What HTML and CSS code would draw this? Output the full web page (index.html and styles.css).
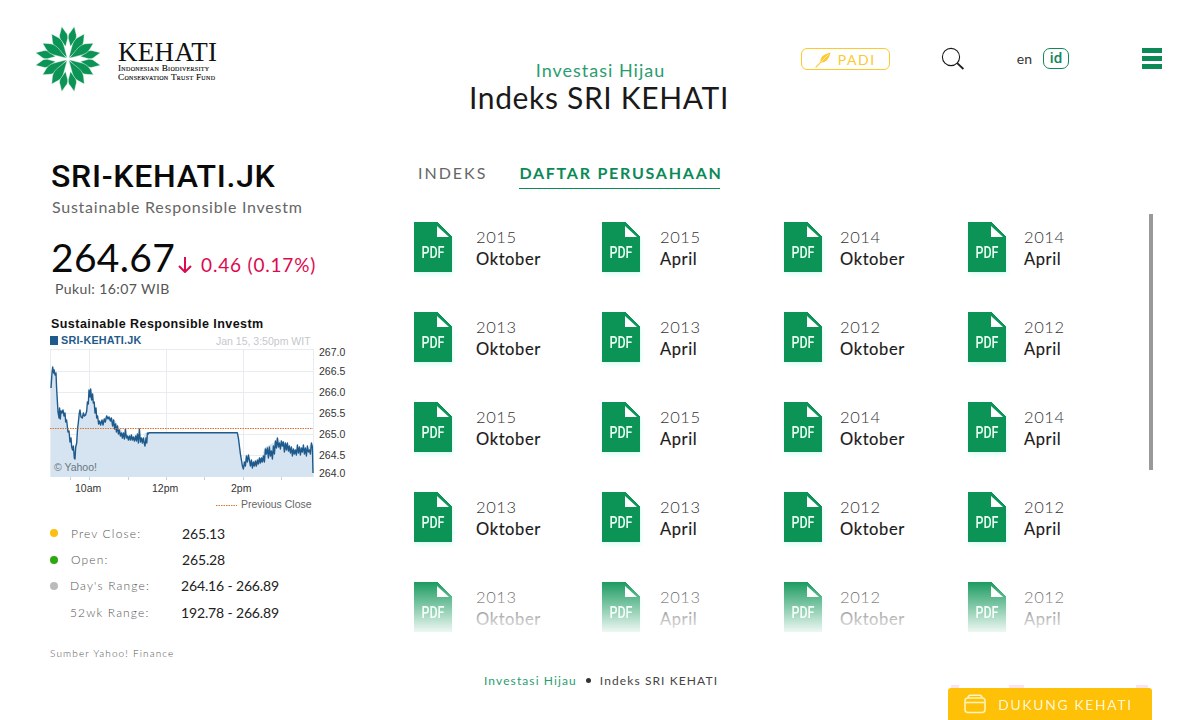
FILE: index.html
```html
<!DOCTYPE html>
<html lang="id">
<head>
    <meta charset="UTF-8">
    <meta name="viewport" content="width=device-width, initial-scale=1.0">
    <title>Indeks SRI KEHATI</title>
    <link rel="stylesheet" href="styles.css">
</head>
<body>
    <header class="site-header">
        <a class="logo">
            <svg class="logo-mark" viewBox="-32.5 -32.5 65 65" width="66" height="66">
                <defs>
                    <path id="leaf-long" d="M0 -1.5 L4 -14 C5 -18 4.4 -21 3.4 -23 L0 -29.5 L-3.4 -23 C-4.4 -21 -5 -18 -4 -14Z"/>
                    <path id="leaf-short" d="M0 -12.5 L3.6 -20 C4.4 -23 3.8 -25 3 -26 L0 -32.5 L-3 -26 C-3.8 -25 -4.4 -23 -3.6 -20Z"/>
                </defs>
                <g fill="#0b9455" stroke="#fff" stroke-width="0.4">
                    <use href="#leaf-short" transform="rotate(11)"/>
                    <use href="#leaf-short" transform="rotate(-11)"/>
                    <use href="#leaf-short" transform="rotate(79)"/>
                    <use href="#leaf-short" transform="rotate(-79)"/>
                    <use href="#leaf-short" transform="rotate(101)"/>
                    <use href="#leaf-short" transform="rotate(-101)"/>
                    <use href="#leaf-short" transform="rotate(169)"/>
                    <use href="#leaf-short" transform="rotate(-169)"/>
                    <use href="#leaf-long" transform="rotate(33)"/>
                    <use href="#leaf-long" transform="rotate(-33)"/>
                    <use href="#leaf-long" transform="rotate(58)"/>
                    <use href="#leaf-long" transform="rotate(-58)"/>
                    <use href="#leaf-long" transform="rotate(122)"/>
                    <use href="#leaf-long" transform="rotate(-122)"/>
                    <use href="#leaf-long" transform="rotate(147)"/>
                    <use href="#leaf-long" transform="rotate(-147)"/>
                </g>
            </svg>
            <div class="logo-text">
                <div class="logo-name">KEHATI</div>
                <div class="logo-sub">Indonesian Biodiversity</div>
                <div class="logo-sub">Conservation Trust Fund</div>
            </div>
        </a>
        <div class="page-title">
            <div class="page-kicker">Investasi Hijau</div>
            <h1>Indeks SRI KEHATI</h1>
        </div>
        <nav class="header-tools">
            <a class="padi-button">
                <svg viewBox="0 0 18 18" width="17" height="17" fill="#fdc92f" stroke="#fdc92f" stroke-width="1.2" stroke-linecap="round">
                    <path d="M1 17 L8 10"/>
                    <path d="M6 12 C5 8 8 5 10 4 C13 2.5 15 2 16.5 1.5 C16 3.5 15.5 5 14 8 C13 10 10 13 6 12Z" stroke="none"/>
                    <path d="M7 11 L14 4" stroke="#fff" stroke-width="0.7"/>
                </svg>
                PADI
            </a>
            <svg class="search-icon" viewBox="0 0 24 24" width="24" height="24" fill="none" stroke="#1a1a1a">
                <circle cx="10" cy="10" r="8.6" stroke-width="1.1"/>
                <path d="M16.2 16.2 L22.4 22" stroke-width="1.8"/>
            </svg>
            <div class="lang-switch">
                <a>en</a>
                <a class="lang-active">id</a>
            </div>
            <div class="burger"><span></span><span></span><span></span></div>
        </nav>
    </header>

    <main class="content">
        <section class="quote-panel">
            <h2 class="ticker">SRI-KEHATI.JK</h2>
            <div class="ticker-name">Sustainable Responsible Investm</div>
            <div class="price-row">
                <span class="price">264.67</span>
                <svg class="price-arrow" viewBox="0 0 14 16" width="14" height="16" fill="none" stroke="#dc0a50" stroke-width="2">
                    <path d="M7 0 L7 15 M1 9 L7 15 L13 9"/>
                </svg>
                <span class="change">0.46 (0.17%)</span>
            </div>
            <div class="quote-time">Pukul: 16:07 WIB</div>

            <svg class="chart" viewBox="0 0 320 200" width="320" height="200">
                <text class="chart-title" x="1" y="12">Sustainable Responsible Investm</text>
                <rect x="0" y="20" width="8" height="9" fill="#1f5a8c"/>
                <text class="chart-symbol" x="11" y="28">SRI-KEHATI.JK</text>
                <text class="chart-date" x="166" y="29">Jan 15, 3:50pm WIT</text>

                <g stroke="#e6ecef" fill="none">
                    <path d="M0 33.5H263M0 55.5H263M0 76.5H263M0 97.5H263M0 118.5H263M0 139.5H263"/>
                    <path d="M39.5 33V161M116.5 33V161M193.5 33V161"/>
                    <path d="M0.5 33V161M263.5 33V161"/>
                </g>
                <path fill="#d5e4f0" d="M1 72 L2.7 51 L5 59 L6 57 L7.3 84 L9 102 L10.7 94 L13.3 94 L15 97 L18 116 L21.7 131 L24.3 142 L26 127 L28.3 107 L30 94 L32.3 101 L36.7 96 L39 74 L40.7 74 L43.3 84 L46.7 101 L50 107 L56.7 99 L65 104 L70 112 L75 119 L81.7 121 L91.7 127 L95 117 L98.3 116.7 L187.3 116.7 L191.7 141 L193.3 152 L196.7 139 L203 149 L211.7 141 L215 131 L225 126 L226.7 122 L240 131 L245 139 L250 131 L256 136 L262 126 L263 157 L263 161 L1 161Z"/>
                <path fill="none" stroke="#1f5a8c" stroke-width="1.4" stroke-linejoin="round" d="M1 72 L2 57 L2.7 51 L3.6 57 L4.2 54 L5 59 L6 57 L6.6 72 L7.3 84 L8 96 L9 102 L9.6 92 L10.3 103 L11 95 L12 97 L13 94 L14 100 L15 97 L15.7 106 L16.6 104 L18 116 L19 115 L20 126 L21 122 L21.7 131 L22.6 134 L23.4 130 L24.3 142 L25 143 L25.7 131 L26.7 127 L27.6 112 L28.3 107 L29.2 98 L30 94 L31 101 L32.3 102 L33.4 97 L34.4 100 L35.6 99 L36.7 95 L37.4 86 L38.3 88 L39 74 L40 81 L40.7 73 L41.6 84 L42.6 78 L43.3 87 L44.2 86 L45 97 L46 92 L46.7 102 L47.6 100 L48.6 108 L49.6 105 L50.6 109 L52 104 L53 109 L54.3 103 L55.3 106 L56.7 100 L58 103 L59 101 L60.4 105 L61.4 102 L62.6 110 L63.6 104 L64.6 113 L65.6 108 L66.4 116 L67.4 110 L68.4 118 L69.4 114 L70.4 120 L71.4 117 L72.4 122 L73.4 117 L74.4 123 L75.4 113 L76.4 122 L77.4 120 L78.4 124 L79.4 120 L80.4 124 L81.4 119 L82.4 124 L83.4 121 L84.4 125 L85.6 120 L86.4 125 L87.4 118 L88.4 127 L89.4 113 L90.4 126 L91.4 122 L92.4 127 L93.4 122 L94.4 128 L95 130 L96 122 L96.8 127 L97.4 117 L98.3 118 L99 116.7 L187.3 116.7 L188.4 122 L189.4 130 L190.4 138 L191.4 144 L192.4 150 L193.4 153 L194.4 146 L195.4 150 L196.4 140 L197.4 146 L198.4 139 L199.4 144 L200.4 150 L201.4 144 L202.4 152 L203.4 146 L204.4 150 L205.4 145 L206.4 150 L207.4 144 L208.4 148 L209.4 142 L210.4 147 L211.4 142 L212.4 146 L213.4 140 L214.4 146 L215.4 133 L216.4 138 L217.4 132 L218.4 142 L219.4 131 L220.4 140 L221.4 135 L222.4 143 L223.4 130 L224.4 138 L225.4 125 L226.4 132 L227.4 122 L228.4 131 L229.4 127 L230.4 133 L231.4 125 L232.4 130 L233.4 126 L234.4 136 L235.4 127 L236.4 134 L237.4 127 L238.4 135 L239.4 130 L240.4 137 L241.4 131 L242.4 140 L243.4 133 L244.4 138 L245.4 134 L246.4 139 L247.4 129 L248.4 137 L249.4 131 L250.4 139 L251.4 132 L252.4 136 L253.4 129 L254.4 138 L255.4 132 L256.4 140 L257.4 130 L258.4 136 L259.4 134 L260.4 138 L261.4 127 L262.4 131 L263 157"/>
                <path d="M0 112.5H263" stroke="#e07030" stroke-width="1" stroke-dasharray="1.5 1"/>
                <text class="chart-credit" x="4" y="155">© Yahoo!</text>

                <g class="chart-axis">
                    <text x="269" y="40">267.0</text>
                    <text x="269" y="59">266.5</text>
                    <text x="269" y="80">266.0</text>
                    <text x="269" y="101">265.5</text>
                    <text x="269" y="122">265.0</text>
                    <text x="269" y="143">264.5</text>
                    <text x="269" y="161">264.0</text>
                    <text x="25" y="176">10am</text>
                    <text x="102" y="176">12pm</text>
                    <text x="181" y="176">2pm</text>
                </g>
                <g stroke="#c9d0d4">
                    <path d="M20.5 161V164M39.5 161V164M78.5 161V164M116.5 161V164M154.5 161V164M193.5 161V164M231.5 161V164"/>
                </g>
                <path d="M166 189.5H187" stroke="#e07030" stroke-dasharray="1.5 1"/>
                <text class="chart-legend" x="191" y="192">Previous Close</text>
            </svg>

            <dl class="stats">
                <div class="stat"><dt class="dot-yellow">Prev Close:</dt><dd>265.13</dd></div>
                <div class="stat"><dt class="dot-green">Open:</dt><dd>265.28</dd></div>
                <div class="stat"><dt class="dot-grey">Day's Range:</dt><dd>264.16 - 266.89</dd></div>
                <div class="stat"><dt>52wk Range:</dt><dd>192.78 - 266.89</dd></div>
            </dl>
            <div class="source">Sumber Yahoo! Finance</div>
        </section>

        <section class="docs-panel">
            <div class="tabs">
                <a class="tab">INDEKS</a>
                <a class="tab tab-active">DAFTAR PERUSAHAAN</a>
            </div>
            <div class="doc-scroll">
                <div class="doc-grid">
                    <a class="doc"><div class="pdf"><span>PDF</span></div><div class="doc-label"><span class="doc-year">2015</span><span class="doc-month">Oktober</span></div></a>
                    <a class="doc"><div class="pdf"><span>PDF</span></div><div class="doc-label"><span class="doc-year">2015</span><span class="doc-month">April</span></div></a>
                    <a class="doc"><div class="pdf"><span>PDF</span></div><div class="doc-label"><span class="doc-year">2014</span><span class="doc-month">Oktober</span></div></a>
                    <a class="doc"><div class="pdf"><span>PDF</span></div><div class="doc-label"><span class="doc-year">2014</span><span class="doc-month">April</span></div></a>

                    <a class="doc"><div class="pdf"><span>PDF</span></div><div class="doc-label"><span class="doc-year">2013</span><span class="doc-month">Oktober</span></div></a>
                    <a class="doc"><div class="pdf"><span>PDF</span></div><div class="doc-label"><span class="doc-year">2013</span><span class="doc-month">April</span></div></a>
                    <a class="doc"><div class="pdf"><span>PDF</span></div><div class="doc-label"><span class="doc-year">2012</span><span class="doc-month">Oktober</span></div></a>
                    <a class="doc"><div class="pdf"><span>PDF</span></div><div class="doc-label"><span class="doc-year">2012</span><span class="doc-month">April</span></div></a>

                    <a class="doc"><div class="pdf"><span>PDF</span></div><div class="doc-label"><span class="doc-year">2015</span><span class="doc-month">Oktober</span></div></a>
                    <a class="doc"><div class="pdf"><span>PDF</span></div><div class="doc-label"><span class="doc-year">2015</span><span class="doc-month">April</span></div></a>
                    <a class="doc"><div class="pdf"><span>PDF</span></div><div class="doc-label"><span class="doc-year">2014</span><span class="doc-month">Oktober</span></div></a>
                    <a class="doc"><div class="pdf"><span>PDF</span></div><div class="doc-label"><span class="doc-year">2014</span><span class="doc-month">April</span></div></a>

                    <a class="doc"><div class="pdf"><span>PDF</span></div><div class="doc-label"><span class="doc-year">2013</span><span class="doc-month">Oktober</span></div></a>
                    <a class="doc"><div class="pdf"><span>PDF</span></div><div class="doc-label"><span class="doc-year">2013</span><span class="doc-month">April</span></div></a>
                    <a class="doc"><div class="pdf"><span>PDF</span></div><div class="doc-label"><span class="doc-year">2012</span><span class="doc-month">Oktober</span></div></a>
                    <a class="doc"><div class="pdf"><span>PDF</span></div><div class="doc-label"><span class="doc-year">2012</span><span class="doc-month">April</span></div></a>

                    <a class="doc"><div class="pdf"><span>PDF</span></div><div class="doc-label"><span class="doc-year">2013</span><span class="doc-month">Oktober</span></div></a>
                    <a class="doc"><div class="pdf"><span>PDF</span></div><div class="doc-label"><span class="doc-year">2013</span><span class="doc-month">April</span></div></a>
                    <a class="doc"><div class="pdf"><span>PDF</span></div><div class="doc-label"><span class="doc-year">2012</span><span class="doc-month">Oktober</span></div></a>
                    <a class="doc"><div class="pdf"><span>PDF</span></div><div class="doc-label"><span class="doc-year">2012</span><span class="doc-month">April</span></div></a>
                </div>
                <div class="doc-fade"></div>
                <div class="doc-scrollbar"></div>
            </div>
        </section>
    </main>

    <div class="breadcrumb">
        <a class="crumb-link">Investasi Hijau</a>
        <span class="crumb-dot"></span>
        <span>Indeks SRI KEHATI</span>
    </div>

    <a class="support-button">
        <svg viewBox="0 0 22 20" width="22" height="20" fill="none" stroke="#fff3c4" stroke-width="1.5">
            <rect x="1" y="4" width="20" height="14.5" rx="3"/>
            <path d="M1.5 8.5 H20.5 M4 4 C4 2 5 1.2 6.5 1.2 H15.5 C17 1.2 18 2 18 4"/>
        </svg>
        DUKUNG KEHATI
    </a>
</body>
</html>
```

FILE: styles.css
```css
html, body {
    height: 720px;
    overflow: hidden;
}
body {
    margin: 0;
    font-family: "Lato", sans-serif;
    color: #1a1a1a;
    background: #fff;
}
a {
    color: inherit;
    text-decoration: none;
}

/* header */
.site-header {
    display: grid;
    grid-template-columns: 1fr auto 1fr;
    height: 146px;
    padding: 0 38px 0 36px;
}
.logo {
    display: flex;
    align-items: flex-start;
    gap: 16px;
    padding-top: 26px;
}
.logo-mark {
    margin-left: -1px;
    margin-right: 1px;
}
.logo-text {
    font-family: "Liberation Serif", serif;
    color: #111;
    margin-top: 14px;
}
.logo-name {
    font-size: 27px;
    line-height: 24px;
    letter-spacing: 0.3px;
}
.logo-sub {
    font-variant: small-caps;
    font-size: 9.2px;
    line-height: 9px;
    letter-spacing: 0.3px;
    -webkit-text-stroke: 0.15px #111;
    white-space: nowrap;
}
.page-title {
    text-align: center;
    padding-top: 59px;
}
.page-kicker {
    padding-left: 3px;
    font-size: 18px;
    line-height: 22px;
    letter-spacing: 1px;
    color: #2a9d70;
}
h1 {
    margin: -2px 0 0;
    font-size: 30px;
    line-height: 36px;
    font-weight: 400;
    letter-spacing: 0.65px;
}
.header-tools {
    display: flex;
    align-items: flex-start;
    justify-content: flex-end;
    padding-top: 48px;
}
.padi-button {
    display: flex;
    align-items: center;
    justify-content: center;
    gap: 6px;
    box-sizing: border-box;
    width: 89px;
    height: 22px;
    border: 1px solid #fdc92f;
    border-radius: 6px;
    color: #fdc92f;
    font-size: 14px;
    letter-spacing: 1.6px;
}
.search-icon {
    margin-left: 51px;
    margin-top: -1px;
}
.lang-switch {
    display: flex;
    align-items: center;
    gap: 11px;
    margin-left: 52px;
    font-size: 14px;
    line-height: 21px;
    color: #333;
}
.lang-active {
    box-sizing: border-box;
    width: 26px;
    height: 21px;
    border: 1px solid #12875c;
    border-radius: 7px;
    color: #12875c;
    font-family: "Roboto", sans-serif;
    font-size: 15px;
    font-weight: 500;
    line-height: 19px;
    text-align: center;
}
.burger {
    display: flex;
    flex-direction: column;
    gap: 3px;
    width: 20px;
    margin-left: 73px;
}
.burger span {
    height: 5px;
    background: #0b8a58;
}

/* main columns */
.content {
    display: flex;
}
.quote-panel {
    width: 364px;
    padding-left: 50px;
    flex-shrink: 0;
}
.ticker {
    margin: 12px 0 0 1px;
    font-family: "Roboto", sans-serif;
    font-size: 32px;
    line-height: 36px;
    font-weight: 500;
    letter-spacing: 0.7px;
    color: #0a0a0a;
}
.ticker-name {
    margin: 3px 0 0 2px;
    font-size: 16px;
    line-height: 20px;
    letter-spacing: 0.75px;
    color: #666;
}
.price-row {
    display: flex;
    align-items: baseline;
    margin: 17px 0 0 1px;
}
.price {
    font-size: 39px;
    line-height: 46px;
    letter-spacing: 0.3px;
    color: #0a0a0a;
}
.price-arrow {
    margin: 0 9px 0 3px;
    transform: translateY(1px);
}
.change {
    font-size: 19px;
    letter-spacing: 0.8px;
    color: #dc0a50;
}
.quote-time {
    margin: 0 0 0 5px;
    font-size: 14px;
    line-height: 18px;
    letter-spacing: 0.4px;
    color: #555;
}
.chart {
    display: block;
    margin-top: 18px;
    font-family: "Liberation Sans", sans-serif;
}
.chart-title {
    font-size: 12.5px;
    font-weight: 700;
    letter-spacing: 0.45px;
    fill: #111;
}
.chart-symbol {
    font-size: 10.8px;
    font-weight: 700;
    letter-spacing: 0.2px;
    fill: #1f5a8c;
}
.chart-date {
    font-size: 10.5px;
    fill: #c4c8cc;
}
.chart-credit {
    font-size: 10.5px;
    fill: #6a7680;
}
.chart-axis text {
    font-size: 10.5px;
    fill: #333;
}
.chart-legend {
    font-size: 10.5px;
    fill: #666;
}
.stats {
    margin: 4px 0 0;
}
.stat {
    display: flex;
    align-items: center;
    height: 26.4px;
}
.stat dt {
    position: relative;
    width: 132px;
    padding-left: 21px;
    box-sizing: border-box;
    font-size: 12px;
    font-weight: 300;
    letter-spacing: 1.15px;
    color: #555;
}
.stat:nth-child(n+3) dt {
    width: 131px;
    padding-left: 20px;
}
.stat dd {
    margin: 0;
    font-size: 14px;
    letter-spacing: -0.15px;
    color: #222;
}
.dot-yellow::before,
.dot-green::before,
.dot-grey::before {
    content: "";
    position: absolute;
    left: 0;
    top: 50%;
    width: 8px;
    height: 8px;
    margin-top: -4px;
    border-radius: 50%;
}
.dot-yellow::before { background: #fdbf12; }
.dot-green::before { background: #2ea80e; }
.dot-grey::before { background: #bbb; }
.source {
    margin-top: 21px;
    font-size: 10px;
    font-weight: 300;
    letter-spacing: 1.15px;
    color: #555;
}

/* documents */
.docs-panel {
    flex: 1;
    min-width: 0;
}
.tabs {
    display: flex;
    gap: 32px;
    margin: 17px 0 0 4px;
}
.tab {
    font-size: 16px;
    line-height: 20px;
    letter-spacing: 2px;
    color: #666;
}
.tab-active {
    position: relative;
    font-weight: 700;
    letter-spacing: 1.75px;
    color: #0b8a58;
}
.tab-active::after {
    content: "";
    position: absolute;
    left: 0;
    right: 3px;
    bottom: -6px;
    height: 1px;
    background: #0b8a58;
}
.doc-scroll {
    position: relative;
    height: 429px;
    margin-top: 24px;
    padding-top: 15px;
    box-sizing: border-box;
    overflow: hidden;
}
.doc-grid {
    display: grid;
    grid-template-columns: 188px 182px 184px 140px;
    grid-auto-rows: 90px;
}
.doc {
    display: flex;
    align-items: flex-start;
}
.doc:nth-child(4n+1) .doc-label { margin-left: 24px; }
.doc:nth-child(4n+2) .doc-label { margin-left: 20px; }
.doc:nth-child(4n+3) .doc-label { margin-left: 18px; }
.doc:nth-child(4n) .doc-label { margin-left: 18px; }
.pdf {
    position: relative;
    width: 38px;
    height: 50px;
    padding-top: 22px;
    box-sizing: border-box;
    background: linear-gradient(225deg, transparent 10.6px, #0b9455 0);
    filter: drop-shadow(1px 3px 2px rgba(120, 255, 220, 0.25));
    color: #e9fff4;
    font-family: "Roboto", sans-serif;
    font-weight: 500;
    text-align: center;
}
.pdf span {
    display: block;
    font-size: 16px;
    line-height: 18px;
    transform: scaleX(0.78);
}
/* page corner: green edge with the white fold on top of it */
.pdf::before {
    content: "";
    position: absolute;
    left: 23px;
    top: 0;
    width: 15px;
    height: 15px;
    background: linear-gradient(45deg, #0b9455 10.6px, transparent 0);
}
.pdf::after {
    content: "";
    position: absolute;
    left: 23px;
    top: 4px;
    width: 12px;
    height: 11px;
    background: #fff;
    clip-path: polygon(0 0, 100% 100%, 0 100%);
}
.doc-label {
    display: flex;
    flex-direction: column;
    padding-top: 4px;
    font-size: 16.5px;
    line-height: 22px;
    letter-spacing: 0.6px;
}
.doc-year {
    font-weight: 300;
    color: #333;
}
.doc-month {
    color: #1a1a1a;
    -webkit-text-stroke: 0.15px #1a1a1a;
}
.doc-fade {
    position: absolute;
    left: 0;
    right: 0;
    bottom: 0;
    height: 58px;
    background: linear-gradient(to bottom, rgba(255,255,255,0), #fff);
}
.doc-scrollbar {
    position: absolute;
    left: 735px;
    top: 7px;
    width: 4px;
    height: 256px;
    background: #999;
}

/* bottom */
.breadcrumb {
    position: absolute;
    left: 484px;
    top: 672px;
    display: flex;
    align-items: center;
    gap: 9px;
    font-size: 12px;
    line-height: 17px;
    letter-spacing: 1.1px;
    color: #444;
}
.crumb-link {
    color: #2a9d70;
}
.crumb-dot {
    width: 5px;
    height: 5px;
    border-radius: 50%;
    background: #333;
}
.support-button {
    position: fixed;
    left: 948px;
    top: 688px;
    display: flex;
    align-items: center;
    gap: 12px;
    box-sizing: border-box;
    width: 204px;
    height: 32px;
    padding-left: 16px;
    border-radius: 3px 3px 0 0;
    background: #ffc107;
    color: #fff6d2;
    font-size: 14px;
    letter-spacing: 1.6px;
}
.support-button::before {
    content: "";
    position: absolute;
    left: 3px;
    right: 3px;
    top: -3px;
    height: 3px;
    background:
        linear-gradient(#fde3ef, #fde3ef) 0 0 / 8px 3px no-repeat,
        linear-gradient(#fde3ef, #fde3ef) 58px 0 / 15px 3px no-repeat,
        linear-gradient(#fde3ef, #fde3ef) 185px 0 / 12px 3px no-repeat;
}
```
